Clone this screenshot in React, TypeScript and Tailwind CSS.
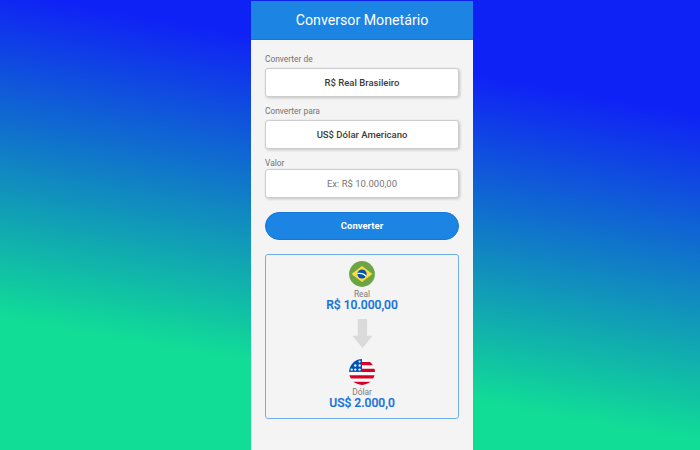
import React from "react";

const field =
  "flex h-[29px] w-full items-center justify-center rounded-[3px] border border-[#cdcdcd] bg-white text-center text-[9.5px] leading-none shadow-[1px_1px_3px_rgba(0,0,0,0.2)]";

function Label({ children }: { children: React.ReactNode }) {
  return <span className="block h-[10px] text-[8.4px] leading-[9px] text-[#737373]">{children}</span>;
}

function BrazilFlag() {
  return (
    <svg className="block size-[26px]" viewBox="0 0 27 27">
      <circle cx="13.5" cy="13.5" r="13.4" fill="#6da544" />
      <path d="M13.5 5.3 24.3 13.5 13.5 21.7 2.7 13.5Z" fill="#ffda44" />
      <circle cx="13.5" cy="13.5" r="4.8" fill="#0052b4" />
      <path d="M8.9 12.4C12.4 11.5 16.2 12.7 18.1 15.1L17.5 16.5C15.6 13.9 12.2 12.8 8.7 13.7Z" fill="#fff" />
    </svg>
  );
}

function UsaFlag() {
  return (
    <svg className="block size-[26px]" viewBox="0 0 27 27">
      <defs>
        <clipPath id="round-flag">
          <circle cx="13.5" cy="13.5" r="13.4" />
        </clipPath>
      </defs>
      <g clipPath="url(#round-flag)">
        <rect width="27" height="27" fill="#fbfbfb" />
        <path d="M13 3h14v3.5H13zM13 10h14v3.4H13zM0 16.8h27v3.4H0zM0 23.6h27V27H0z" fill="#d80027" />
        <rect width="13.5" height="13.4" fill="#0052b4" />
        <g fill="#e8effa">
          <circle cx="11" cy="2.7" r="1.1" />
          <circle cx="6.5" cy="6.8" r="1.25" />
          <circle cx="11" cy="6.8" r="1.25" />
          <circle cx="2.8" cy="11" r="1.25" />
          <circle cx="6.5" cy="11" r="1.25" />
          <circle cx="11" cy="11" r="1.25" />
        </g>
      </g>
    </svg>
  );
}

function Currency({ flag, name, value }: { flag: React.ReactNode; name: string; value: string }) {
  return (
    <div className="flex flex-col items-center">
      {flag}
      <span className="mt-[3px] text-[8.4px] leading-[9px] text-[#7b7b7b]">{name}</span>
      <strong className="text-[12.1px] leading-[12px] font-medium text-[#1471dc] [-webkit-text-stroke:0.2px_#1471dc]">{value}</strong>
    </div>
  );
}

export default function App() {
  return (
    <div className="flex h-[450px] w-[700px] justify-center overflow-hidden bg-[linear-gradient(190deg,#0f22f5_20%,#11dd96_77%)] pl-6 font-['Roboto',sans-serif]">
      <main className="mt-px h-[449px] w-[222px] bg-[#f4f4f4]">
        <header className="flex h-[39px] items-center justify-center border-b border-[#1278dc] bg-[#1c84e3]">
          <h1 className="text-[14.2px] leading-none text-white">Conversor Monetário</h1>
        </header>
        <div className="flex flex-col px-[14px] pt-[15px]">
          <Label>Converter de</Label>
          <button className={`${field} mt-[3px] font-medium text-[#3b3b3b]`}>R$ Real Brasileiro</button>
          <div className="mt-[10px]">
            <Label>Converter para</Label>
          </div>
          <button className={`${field} mt-[3px] font-medium text-[#3b3b3b]`}>US$ Dólar Americano</button>
          <div className="mt-[10px]">
            <Label>Valor</Label>
          </div>
          <input className={`${field} outline-none placeholder:text-[#777777]`} placeholder="Ex: R$ 10.000,00" />
          <button className="mt-[14px] h-[28px] rounded-full border border-[#1278dc] bg-[#1c84e3] text-[9.5px] leading-none font-bold text-white">
            Converter
          </button>
          <section className="mt-[14px] flex h-[165px] flex-col items-center rounded-[3px] border border-[#6fb0eb] pt-[6px]">
            <Currency flag={<BrazilFlag />} name="Real" value="R$ 10.000,00" />
            <svg className="mt-[8px] mb-[11px] h-[29px] w-[21px]" viewBox="0 0 21 29">
              <path d="M5.8 0h9.3v16.7h5.5L10.5 29 .4 16.7h5.4Z" fill="#dadada" />
            </svg>
            <Currency flag={<UsaFlag />} name="Dólar" value="US$ 2.000,0" />
          </section>
        </div>
      </main>
    </div>
  );
}
